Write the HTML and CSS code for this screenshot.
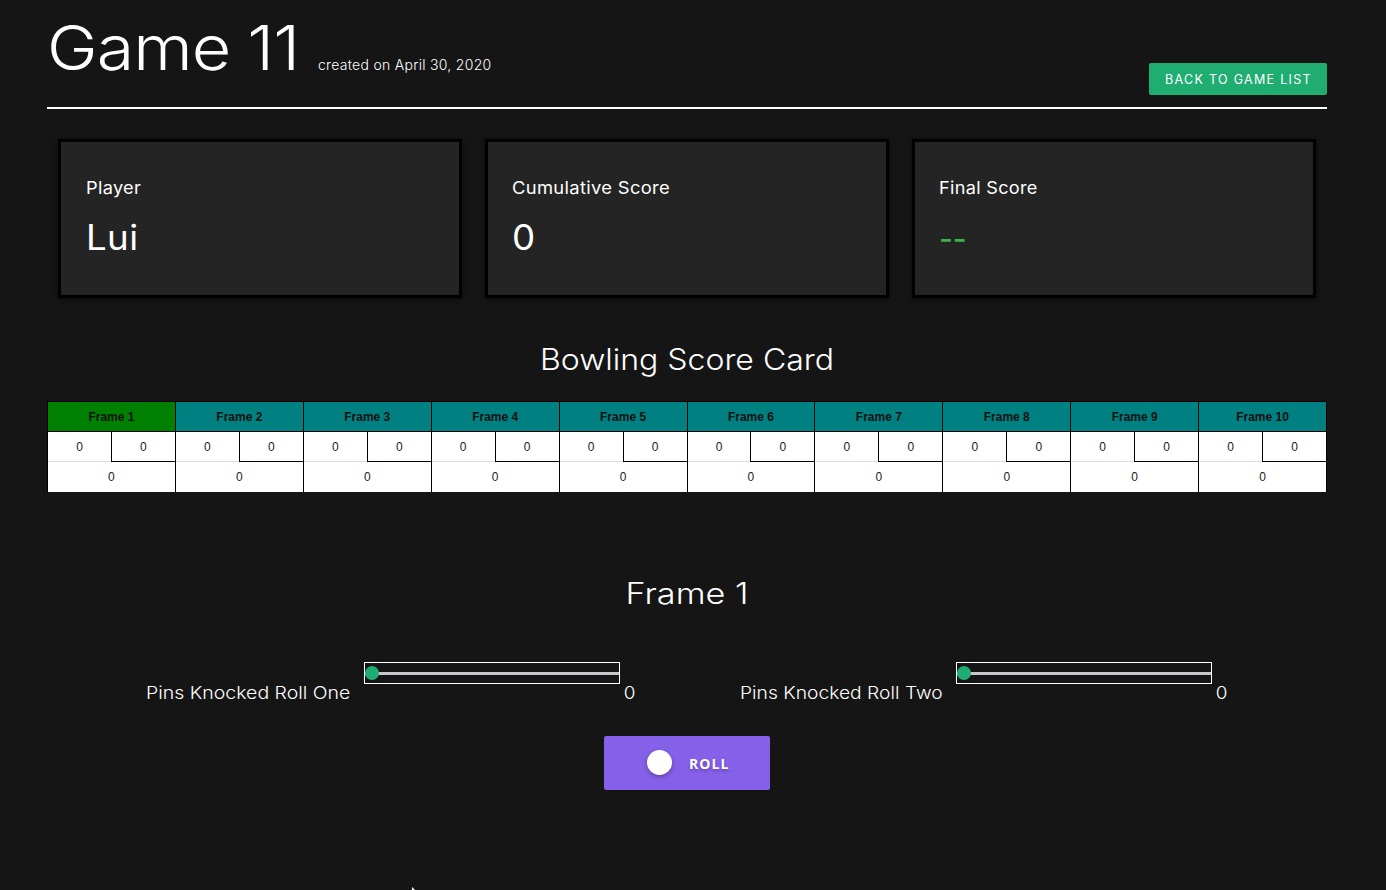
FILE: index.html
```html
<!DOCTYPE html>
<html lang="en">
<head>
<meta charset="utf-8">
<title>Game 11</title>
<link rel="stylesheet" href="styles.css">
</head>
<body>
<main class="page">
  <header class="header">
    <div class="heading"><h1 class="title">Game 11</h1><span class="created">created on April 30, 2020</span></div>
    <a class="back">BACK TO GAME LIST</a>
  </header>
  <section class="cards">
    <div class="card card-player"><div class="label label-player">Player</div><div class="value">Lui</div></div>
    <div class="card"><div class="label label-cumulative">Cumulative Score</div><div class="value">0</div></div>
    <div class="card"><div class="label label-final">Final Score</div><div class="value pending">--</div></div>
  </section>
  <h2 class="subtitle card-title">Bowling Score Card</h2>
  <section class="scorecard" id="scorecard"></section>
  <h2 class="subtitle frame-title">Frame 1</h2>
  <section class="rolls">
    <div class="roll"><span class="roll-label">Pins Knocked Roll One</span><div class="slider"><div class="track"></div><div class="thumb"></div></div><span class="count">0</span></div>
    <div class="roll roll-two"><span class="roll-label">Pins Knocked Roll Two</span><div class="slider"><div class="track"></div><div class="thumb"></div></div><span class="count">0</span></div>
  </section>
  <button class="roll-button"><span class="ball"></span><span class="roll-text">ROLL</span></button>
</main>
<svg class="pointer" viewBox="0 0 4 3"><path d="M0 0L3 3H0Z" fill="#fff"/></svg>
<script src="script.js"></script>
</body>
</html>
```
FILE: script.js
```js
const card = document.getElementById('scorecard');
for (let i = 1; i <= 10; i++) {
  const frame = document.createElement('div');
  frame.className = 'frame' + (i === 1 ? ' current' : '');
  frame.innerHTML = `<div class="frame-name">Frame ${i}</div>
    <div class="throws"><div class="throw">0</div><div class="throw second">0</div></div>
    <div class="total">0</div>`;
  card.appendChild(frame);
}
```
FILE: styles.css
```css
* { box-sizing: border-box; }
html { height: 100%; overflow: hidden; }
body {
  margin: 0;
  height: 890px;
  overflow: hidden;
  background: #151515;
  color: #fff;
  font-family: Inter, "Open Sans", sans-serif;
  font-weight: 300;
}
.page { width: 1280px; margin-left: 47px; }
.header {
  display: flex;
  justify-content: space-between;
  align-items: flex-end;
  height: 109px;
  border-bottom: 2px solid #fff;
}
.heading { display: flex; align-items: baseline; white-space: nowrap; padding-bottom: 20px; }
.title { margin: 0; width: 271px; font-size: 62px; line-height: 78px; font-weight: 330; letter-spacing: -0.9px; word-spacing: -1px; transform: scaleX(1.1); transform-origin: 0 0; }
.created { font-size: 14px; letter-spacing: 0.29px; }
.back {
  width: 178px;
  height: 32px;
  margin-bottom: 12px;
  border-radius: 2px;
  background: #20ad72;
  font-size: 12.5px;
  font-weight: 400;
  line-height: 33px;
  letter-spacing: 1.3px;
  text-indent: 1px;
  text-align: center;
  white-space: nowrap;
}
.cards { display: grid; grid-template-columns: repeat(3, 1fr); gap: 23px; padding: 30px 11px 0; }
.card {
  height: 159px;
  padding: 34px 24px 0;
  border: 3px solid #000;
  background: #242424;
  box-shadow: 0 1px 4px rgba(0, 0, 0, 0.6);
}
.card-player { padding-left: 25px; }
.label { font-size: 17px; line-height: 24px; font-weight: 400; letter-spacing: 0.3px; white-space: nowrap; transform-origin: 0 0; }
.label-player { transform: scaleX(1.07); }
.label-cumulative { transform: scaleX(1.08); }
.label-final { transform: scaleX(1.063); }
.value { margin-top: 13px; font-size: 35px; line-height: 48px; font-weight: 400; letter-spacing: 0.3px; transform: scaleX(1.05); transform-origin: 0 0; }
.pending { padding-top: 1px; color: #39b54a; letter-spacing: 0; transform: scaleX(0.86); }
.subtitle { margin: 41px 0 0; font-size: 29.5px; line-height: 40px; font-weight: 300; text-align: center; letter-spacing: 0; white-space: nowrap; }
.card-title { transform: scaleX(1.085); }
.scorecard {
  display: grid;
  grid-template-columns: repeat(10, 1fr);
  height: 91px;
  margin-top: 22px;
  border-top: 1px solid #000;
  border-left: 1px solid #000;
  color: #222;
  font: 12px/31px "Liberation Sans", Arial, sans-serif;
  text-align: center;
}
.frame { border-right: 1px solid #000; background: #fff; }
.frame-name { height: 30px; border-bottom: 1px solid #000; background: #008080; color: #111; font-weight: 700; }
.current .frame-name { background: #008000; }
.throws { display: flex; height: 30px; }
.throw { flex: 1; border-bottom: 1px solid #ddd; }
.second { border-bottom-color: #000; border-left: 1px solid #000; }
.total { height: 30px; }
.frame-title { margin-top: 81px; transform: scaleX(1.16); }
.rolls { display: flex; margin-top: 49px; padding-left: 99px; }
.roll { display: flex; width: 593px; height: 46px; white-space: nowrap; }
.roll-label { width: 218px; padding-top: 18px; font-size: 17.5px; line-height: 26px; transform: scaleX(1.113); transform-origin: 0 0; }
.roll-two { padding-left: 3px; }
.roll-two .roll-label { width: 216px; transform: scaleX(1.1); }
.slider { position: relative; width: 256px; height: 22px; border: 1px solid #fff; }
.track { height: 3px; margin-top: 9px; background: #c7c7cc; }
.thumb { position: absolute; left: 0; top: 3px; width: 14px; height: 14px; border-radius: 50%; background: #20ad72; }
.count { padding: 18px 0 0 4px; font-size: 17.5px; line-height: 26px; transform: scaleX(1.08); }
.roll-button {
  display: flex;
  align-items: center;
  width: 166px;
  height: 54px;
  margin: 28px 0 0 557px;
  padding: 0 0 0 43px;
  border: 0;
  border-radius: 2px;
  background: #8560e8;
  color: #fff;
  font: 700 14px/20px "Open Sans", sans-serif;
  letter-spacing: 1.1px;
  text-shadow: 0 2px 3px rgba(0, 0, 0, 0.25);
}
.roll-text { padding-top: 1px; }
.ball { width: 25px; height: 25px; margin: 0 17px 1px 0; border-radius: 50%; background: #fff; box-shadow: 0 2px 4px rgba(0, 0, 0, 0.3); }
.pointer { position: absolute; left: 412px; top: 887px; width: 4px; height: 3px; }
```
